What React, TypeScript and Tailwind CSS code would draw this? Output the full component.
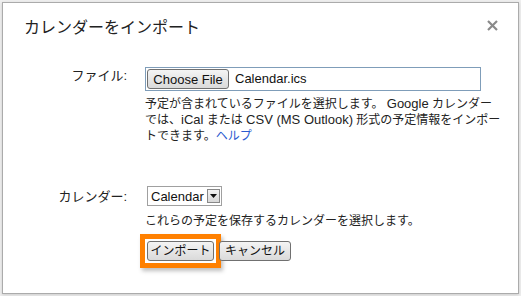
import React from 'react';

const jp = { fontFamily: '"Liberation Sans", Arial, "Noto Sans CJK JP", sans-serif' };

const Btn = ({ children, className = '' }: { children: React.ReactNode; className?: string }) => (
  <div
    className={`h-[20px] flex items-center justify-center rounded-[3px] border border-[#707070] bg-gradient-to-b from-[#f4f4f4] to-[#dadada] text-[12px] text-[#111] leading-none ${className}`}
  >
    {children}
  </div>
);

const App = () => {
  return (
    <div className="w-[521px] h-[296px] bg-[#efefef] p-[2px]" style={jp}>
      <div className="relative h-full bg-white border border-[#ababab] shadow-[0_1px_3px_rgba(0,0,0,0.15)]">
        <div className="flex items-start justify-between pl-[21px] pr-[20px] pt-[13px]">
          <h1 className="text-[16px] leading-[24px] text-[#222] font-normal">カレンダーをインポート</h1>
          <svg width="11" height="11" viewBox="0 0 11 11" className="mt-[4px]">
            <path d="M1 1L10 10M10 1L1 10" stroke="#8a8a8a" strokeWidth="2.2" />
          </svg>
        </div>

        <div className="grid grid-cols-[124px_1fr] gap-x-[18px] mt-[27px]">
          <div className="text-right text-[13px] text-[#222] leading-[18px]">ファイル:</div>
          <div>
            <div className="w-[336px] h-[24px] border border-[#7f9db9] flex items-center pl-[1px]">
              <Btn className="w-[82px]">
                <span className="text-[13px]">Choose File</span>
              </Btn>
              <span className="ml-[6px] text-[13px] text-[#111]">Calendar.ics</span>
            </div>
            <p className="mt-[5px] text-[12px] leading-[16px] text-[#222] whitespace-nowrap">
              予定が含まれているファイルを選択します。 <span className="text-[13px]">Google</span> カレンダー
              <br />
              では、<span className="text-[13px]">iCal</span> または <span className="text-[13px]">CSV (MS Outlook)</span> 形式の予定情報をインポー
              <br />
              トできます。<span className="text-[#2a5bd0]">ヘルプ</span>
            </p>
          </div>

          <div className="text-right text-[13px] text-[#222] leading-[18px] mt-[42px] pt-[2px]">カレンダー:</div>
          <div className="mt-[42px] pl-[2px]">
            <div className="w-[75px] h-[20px] border border-[#a0a0a0] flex items-center justify-between pl-[3px] pr-[1px]">
              <span className="text-[13px] text-[#111] leading-none">Calendar</span>
              <div className="w-[13px] h-[14px] border border-[#888] bg-gradient-to-b from-[#f4f4f4] to-[#d8d8d8] flex items-center justify-center">
                <svg width="7" height="4" viewBox="0 0 7 4">
                  <path d="M0 0h7L3.5 4z" fill="#111" />
                </svg>
              </div>
            </div>
            <p className="mt-[7px] text-[12px] leading-[16px] text-[#222] -ml-[2px]">これらの予定を保存するカレンダーを選択します。</p>
            <div className="flex items-start mt-[5px] -ml-[7px]">
              <div className="border-[5px] border-[#ff8000] p-[2px] shadow-[2px_3px_4px_rgba(0,0,0,0.25)]">
                <Btn className="w-[67px]">インポート</Btn>
              </div>
              <Btn className="w-[72px] mt-[7px] -ml-[2px]">キャンセル</Btn>
            </div>
          </div>
        </div>
      </div>
    </div>
  );
};

export default App;
